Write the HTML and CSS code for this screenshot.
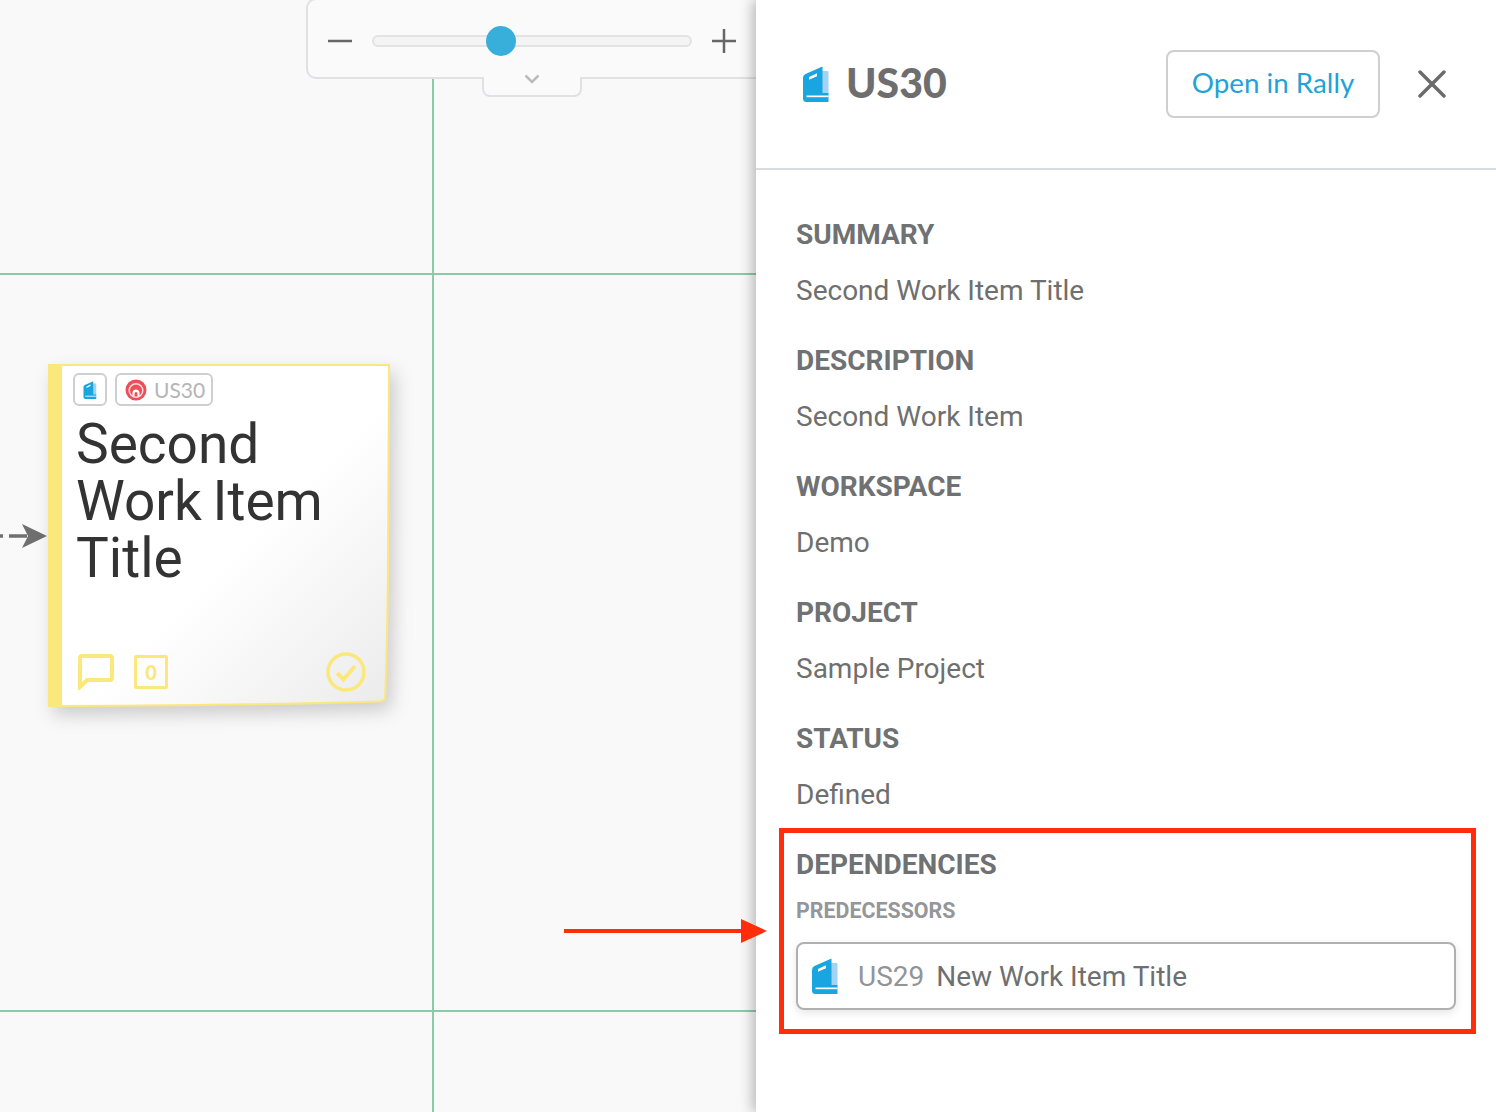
FILE: index.html
```html
<!DOCTYPE html>
<html lang="en">
<head>
    <meta charset="UTF-8">
    <title>US30 - Second Work Item Title</title>
    <link rel="stylesheet" href="styles.css">
</head>
<body>
    <svg class="defs" width="0" height="0">
        <symbol id="book" viewBox="0 0 28 36">
            <path d="M19 5h6.500q1 0 1 1v22H19z" fill="#a3d2f2"/>
            <path d="M1 12q0-3 2.500-4L20.500 0.500V27H26.500V36H4.500q-3.500 0-3.500-3.500z" fill="#18a5e0"/>
            <path d="M4.500 29.500h22v1.700h-22z" fill="#fff"/>
            <path d="M7 11l8-3.800v3L7 13.800z" fill="#fff"/>
        </symbol>
        <linearGradient id="paper" x1="0.55" y1="0.55" x2="1" y2="1">
            <stop offset="0" stop-color="#fff"/>
            <stop offset="1" stop-color="#ebebeb"/>
        </linearGradient>
    </svg>

    <main class="canvas">
        <div class="grid-line horizontal line-top"></div>
        <div class="grid-line horizontal line-bottom"></div>
        <div class="grid-line vertical"></div>

        <div class="zoom-bar">
            <svg class="zoom-icon" viewBox="0 0 24 24"><path d="M0 12h24" /></svg>
            <div class="slider"><span class="knob"></span></div>
            <svg class="zoom-icon" viewBox="0 0 24 24"><path d="M0 12h24M12 0v24" /></svg>
        </div>
        <div class="zoom-tab">
            <svg width="16" height="10" viewBox="0 0 16 10"><path d="M1.500 1.500L8 8l6.500-6.500" fill="none" stroke="#bbb" stroke-width="2.500"/></svg>
        </div>

        <svg class="link-arrow" width="48" height="26" viewBox="0 0 48 26">
            <path d="M0 13h3M9 13h18" stroke="#6f6f6f" stroke-width="3.500" fill="none"/>
            <path d="M22 1l25 12-25 12 6-12z" fill="#6f6f6f"/>
        </svg>

        <article class="sticky">
            <svg class="sticky-paper" width="342" height="343" viewBox="0 0 342 343">
                <path d="M1 1H341L340 200Q339 300 337 334Q336.500 337 331 337.500Q200 341.500 1 342z" fill="url(#paper)" stroke="#fbe87c" stroke-width="2"/>
                <path d="M0 0h14v343H0z" fill="#fbe87c"/>
            </svg>
            <div class="sticky-body">
                <div class="sticky-tags">
                    <span class="tag tag-icon"><svg width="14" height="18"><use href="#book"/></svg></span>
                    <span class="tag">
                        <svg width="22" height="22" viewBox="0 0 22 22">
                            <circle cx="11" cy="11" r="10.500" fill="#e9505a"/>
                            <circle cx="11" cy="11.500" r="6.800" fill="none" stroke="#fbdadc" stroke-width="1.500"/>
                            <path d="M7.500 17v-3a3.500 3.500 0 0 1 7 0v3z" fill="#fff"/>
                            <path d="M9.500 17v-2.500a1.500 1.500 0 0 1 3 0V17z" fill="#e9505a"/>
                        </svg>
                        US30
                    </span>
                </div>
                <h1 class="sticky-title">Second Work Item Title</h1>
                <div class="sticky-footer">
                    <svg class="foot-icon" width="36" height="36" viewBox="0 0 36 36">
                        <path d="M2 33V4q0-2 2-2h28q2 0 2 2v20q0 2-2 2H9z" fill="none" stroke="#fbe87c" stroke-width="4"/>
                    </svg>
                    <span class="count">0</span>
                    <svg class="check" width="40" height="40" viewBox="0 0 40 40">
                        <circle cx="20" cy="20" r="18" fill="none" stroke="#fbe87c" stroke-width="3.500"/>
                        <path d="M11 21l6.500 6.500L29 14" fill="none" stroke="#fbe87c" stroke-width="4"/>
                    </svg>
                </div>
            </div>
        </article>
    </main>

    <aside class="panel">
        <header class="panel-header">
            <svg class="panel-book" width="28" height="36"><use href="#book"/></svg>
            <h2 class="panel-title">US30</h2>
            <button class="open-btn">Open in Rally</button>
            <svg class="close" width="28" height="28" viewBox="0 0 28 28"><path d="M2 2l24 24M26 2L2 26" stroke="#6b6b6b" stroke-width="3.500" stroke-linecap="round"/></svg>
        </header>
        <div class="panel-body">
            <section class="field">
                <h3>SUMMARY</h3>
                <p>Second Work Item Title</p>
            </section>
            <section class="field">
                <h3>DESCRIPTION</h3>
                <p>Second Work Item</p>
            </section>
            <section class="field">
                <h3>WORKSPACE</h3>
                <p>Demo</p>
            </section>
            <section class="field">
                <h3>PROJECT</h3>
                <p>Sample Project</p>
            </section>
            <section class="field">
                <h3>STATUS</h3>
                <p>Defined</p>
            </section>
            <section class="field">
                <h3>DEPENDENCIES</h3>
                <h4>PREDECESSORS</h4>
                <div class="dep-row">
                    <svg width="28" height="36"><use href="#book"/></svg>
                    <span class="dep-id">US29</span>
                    <span>New Work Item Title</span>
                </div>
            </section>
        </div>
    </aside>

    <!-- annotation on top of the screenshot -->
    <div class="callout-box"></div>
    <svg class="callout-arrow" width="204" height="26" viewBox="0 0 204 26">
        <path d="M0 13h180" stroke="#ff2d0a" stroke-width="4"/>
        <path d="M177 1l26 12-26 12z" fill="#ff2d0a"/>
    </svg>
</body>
</html>
```

FILE: styles.css
```css
body {
    margin: 0;
    width: 1496px;
    height: 1112px;
    display: flex;
    position: relative;
    overflow: hidden;
    font-family: Roboto, sans-serif;
    background-color: #f9f9f9;
}

.defs {
    position: absolute;
}

.canvas {
    width: 756px;
    flex-shrink: 0;
    position: relative;
    overflow: hidden;
}

.grid-line {
    position: absolute;
    background-color: #8ccba8;
}

.horizontal {
    left: 0;
    right: 0;
    height: 2px;
}

.line-top {
    top: 273px;
}

.line-bottom {
    top: 1010px;
}

.vertical {
    left: 432px;
    top: 78px;
    bottom: 0;
    width: 2px;
}

.zoom-bar {
    position: absolute;
    left: 306px;
    top: -2px;
    width: 470px;
    height: 81px;
    box-sizing: border-box;
    padding: 4px 0 0 20px;
    display: flex;
    align-items: center;
    gap: 20px;
    background-color: #fafafa;
    border: 2px solid #dfe1e4;
    border-radius: 10px;
}

.zoom-icon {
    width: 24px;
    height: 24px;
    stroke: #666;
    stroke-width: 2.500;
    flex-shrink: 0;
}

.slider {
    width: 320px;
    height: 12px;
    box-sizing: border-box;
    position: relative;
    flex-shrink: 0;
    background-color: #f4f4f4;
    border: 2px solid #e2e3e5;
    border-radius: 6px;
}

.knob {
    position: absolute;
    left: 112px;
    top: -11px;
    width: 30px;
    height: 30px;
    border-radius: 50%;
    background-color: #38aedb;
}

.zoom-tab {
    position: absolute;
    left: 482px;
    top: 77px;
    width: 100px;
    height: 20px;
    box-sizing: border-box;
    text-align: center;
    background-color: #fafafa;
    border: 2px solid #dfe1e4;
    border-top: none;
    border-radius: 0 0 8px 8px;
}

.zoom-tab svg {
    display: block;
    margin: -3px auto 0;
}

.link-arrow {
    position: absolute;
    left: 0;
    top: 523px;
}

.sticky {
    position: absolute;
    left: 48px;
    top: 364px;
    width: 342px;
    height: 343px;
}

.sticky-paper {
    position: absolute;
    left: 0;
    top: 0;
    filter: drop-shadow(5px 8px 9px rgba(0,0,0,0.18));
}

.sticky-body {
    position: relative;
    height: 100%;
    box-sizing: border-box;
    padding: 9px 24px 15px 25px;
    display: flex;
    flex-direction: column;
}

.sticky-tags {
    display: flex;
    gap: 8px;
}

.tag {
    height: 33px;
    box-sizing: border-box;
    padding: 0 6px 0 8px;
    display: flex;
    align-items: center;
    gap: 7px;
    font-family: Lato, sans-serif;
    font-size: 21px;
    color: #b5b5b5;
    background-color: #fff;
    border: 2px solid #cfcfcf;
    border-radius: 6px;
}

.tag-icon {
    width: 34px;
    padding: 0;
    justify-content: center;
}

.sticky-title {
    margin: 10px 0 0 3px;
    font-family: Roboto, sans-serif;
    font-size: 55px;
    font-weight: 400;
    line-height: 57px;
    word-spacing: -3px;
    color: #333;
}

.sticky-footer {
    margin-top: auto;
    display: flex;
    align-items: center;
    gap: 20px;
    padding-left: 5px;
}

.count {
    width: 34px;
    height: 34px;
    box-sizing: border-box;
    display: flex;
    align-items: center;
    justify-content: center;
    font-family: Lato, sans-serif;
    font-size: 20px;
    font-weight: 900;
    color: #fbe87c;
    border: 3.500px solid #fbe87c;
    border-radius: 2px;
}

.check {
    margin-left: auto;
}

.panel {
    width: 740px;
    flex-shrink: 0;
    position: relative;
    background-color: #fff;
    box-shadow: -4px 0 12px rgba(0,0,0,0.25);
}

.panel-header {
    height: 170px;
    box-sizing: border-box;
    padding: 0 50px 0 46px;
    display: flex;
    align-items: center;
    border-bottom: 2px solid #d9dcdf;
}

.panel-title {
    margin: -4px 0 0 16px;
    font-family: Lato, sans-serif;
    font-size: 41px;
    font-weight: 900;
    color: #6e6e6e;
}

.open-btn {
    margin-left: auto;
    width: 214px;
    height: 68px;
    padding: 0 0 4px;
    font-family: Lato, sans-serif;
    font-size: 27.800px;
    color: #1fa3d8;
    background-color: #fff;
    border: 2px solid #cfcfcf;
    border-radius: 8px;
}

.close {
    margin-left: 38px;
}

.panel-body {
    padding: 47px 40px 0;
}

.field {
    margin-bottom: 34px;
}

.field h3 {
    margin: 0;
    font-size: 28px;
    font-weight: 700;
    line-height: 36px;
    color: #707173;
}

.field p {
    margin: 20px 0 0;
    font-size: 28px;
    line-height: 36px;
    color: #6f6f6f;
}

.field h4 {
    margin: 14px 0 0;
    font-size: 21.400px;
    font-weight: 700;
    line-height: 28px;
    color: #949699;
}

.dep-row {
    margin-top: 17px;
    height: 68px;
    box-sizing: border-box;
    padding-left: 13px;
    display: flex;
    align-items: center;
    gap: 12px;
    font-size: 28px;
    color: #6f6f6f;
    border: 2px solid #b0b0b0;
    border-radius: 8px;
    box-shadow: 0 3px 8px rgba(0,0,0,0.1);
}

.dep-row svg {
    margin-right: 7px;
}

.dep-id {
    color: #929497;
}

.callout-box {
    position: absolute;
    left: 779px;
    top: 828px;
    width: 697px;
    height: 206px;
    box-sizing: border-box;
    border: 5px solid #ff2d0a;
}

.callout-arrow {
    position: absolute;
    left: 564px;
    top: 918px;
}
```
